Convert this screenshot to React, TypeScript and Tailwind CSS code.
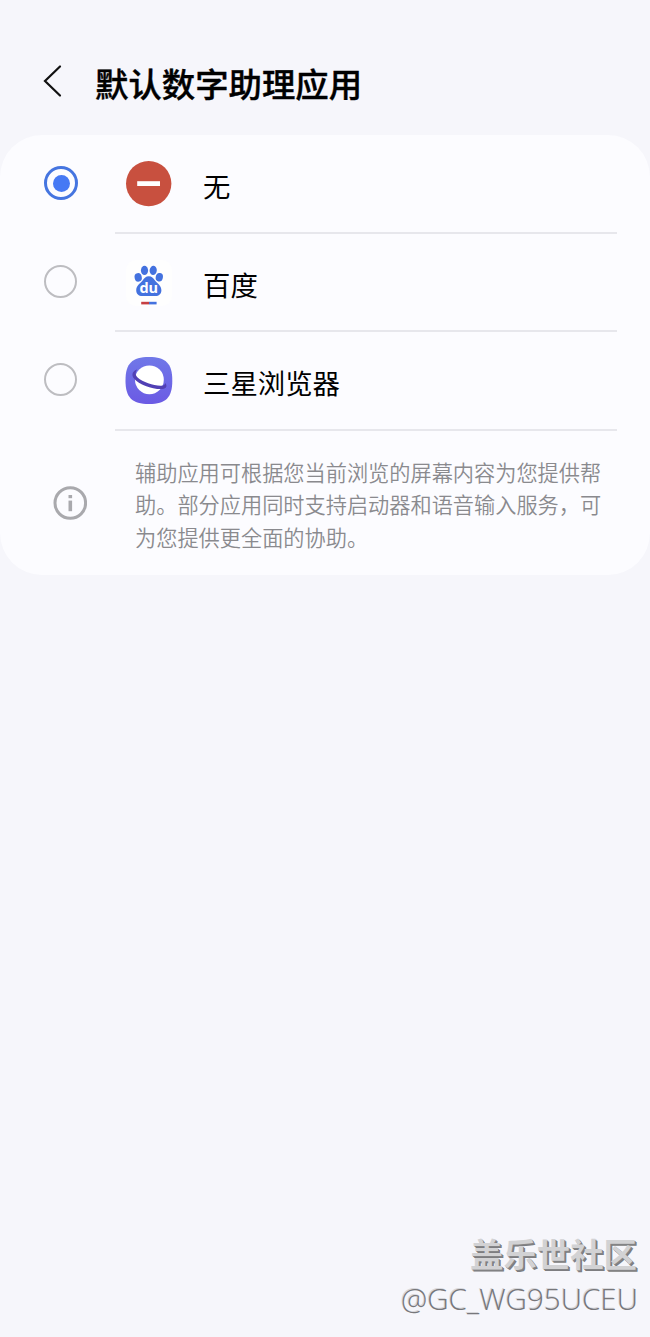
import type { ReactNode } from "react";

function NoneIcon() {
  return (
    <svg viewBox="0 0 48 48" className="size-12">
      <circle cx="23.7" cy="23.6" r="22.7" fill="#c8503f" />
      <rect x="12.2" y="21.2" width="22.8" height="4.8" fill="#fff" />
    </svg>
  );
}

function BaiduIcon() {
  return (
    <svg viewBox="0 0 48 48" className="size-12">
      <rect x="1" y="1" width="46" height="46" rx="10" fill="#fefefe" />
      <g fill="#4472df">
        <ellipse cx="13.2" cy="18.4" rx="3.6" ry="4.3" transform="rotate(-12 13.2 18.4)" />
        <ellipse cx="19.5" cy="11.4" rx="3.6" ry="4.6" />
        <ellipse cx="28.2" cy="11.4" rx="3.6" ry="4.6" transform="rotate(6 28.2 11.4)" />
        <ellipse cx="34.3" cy="18.2" rx="3.6" ry="4.3" transform="rotate(12 34.3 18.2)" />
        <path d="M23.800 17.2c-3 0-4.400 2-6.200 4.200-2 2.600-6.400 5-6.400 9.800 0 3.800 2.600 5.800 6 5.800h13.2c3.400 0 6-2 6-5.800 0-4.800-4.400-7.200-6.400-9.800-1.800-2.200-3.200-4.200-6.200-4.200Z" />
      </g>
      <text
        x="23.8"
        y="34.2"
        textAnchor="middle"
        fill="#fff"
        className="font-['Open_Sans',sans-serif] text-[14.5px] font-bold"
      >
        du
      </text>
      <rect x="16.2" y="42.8" width="8" height="2.6" fill="#c63f43" />
      <rect x="24" y="42.8" width="7.6" height="2.6" fill="#4472df" />
    </svg>
  );
}

function SamsungInternetIcon() {
  return (
    <svg viewBox="0 0 48 48" className="size-12">
      <defs>
        <linearGradient id="browser-bg" x1="0" y1="0" x2="0" y2="1">
          <stop offset="0" stopColor="#7078e8" />
          <stop offset="1" stopColor="#6b5ae4" />
        </linearGradient>
      </defs>
      <path
        d="M24 0C41 0 47.3 6.5 47.3 23.5S41 47 24 47 .5 40.5.5 23.5 7 0 24 0Z"
        fill="url(#browser-bg)"
      />
      <circle cx="24.4" cy="22.8" r="14.4" fill="#fff" />
      <path
        d="M12.2 12.4C7.600 13.600 6 17.800 9 21.400c5 6 17 10.400 27 10.700 5.400.1 6.600-2.700 4.400-6.100-.6 2-1.800 2.800-4.800 2.700-7.600-.3-17.800-3.600-23-8.300-2.600-2.400-2.400-5.400-.4-8Z"
        fill="#5140b4"
      />
    </svg>
  );
}

function Radio({ checked }: { checked: boolean }) {
  return checked ? (
    <div className="flex size-[34px] items-center justify-center rounded-full border-[3px] border-[#4575e0]">
      <div className="size-[17px] rounded-full bg-[#4679f4]" />
    </div>
  ) : (
    <div className="size-[33px] rounded-full border-2 border-[#bdbdc1]" />
  );
}

type Option = {
  name: string;
  icon: ReactNode;
  checked: boolean;
};

export default function App() {
  const options: Option[] = [
    { name: "无", icon: <NoneIcon />, checked: true },
    { name: "百度", icon: <BaiduIcon />, checked: false },
    { name: "三星浏览器", icon: <SamsungInternetIcon />, checked: false },
  ];

  return (
    <main className="flex h-[1337px] w-[650px] flex-col overflow-hidden bg-[#f6f6fb] font-['Noto_Sans_CJK_SC',sans-serif] text-black">
      <header className="flex h-[135px] items-start pt-[58px] pl-[42px]">
        <svg viewBox="0 0 20 34" className="mt-[6px] h-[34px] w-5" fill="none">
          <path d="M18 2.5 3 17l15 14.5" stroke="#111" strokeWidth="2.2" strokeLinecap="round" />
        </svg>
        <h1 className="ml-[33px] text-[33.4px] leading-[50px] font-medium [-webkit-text-stroke:0.4px_#000]">
          默认数字助理应用
        </h1>
      </header>

      <section className="h-[440px] rounded-[42px] bg-[#fcfcff]">
        {options.map((option) => (
          <div key={option.name} className="flex h-[98.5px] pl-11">
            <div className="w-[34px] pt-[31px]">
              <Radio checked={option.checked} />
            </div>
            <div className="ml-[37px] flex w-[502px] border-b-2 border-[#e7e7ec] pl-[10px]">
              <div className="mt-[25px]">{option.icon}</div>
              <div className="mt-[30px] ml-[30px] text-[27.4px] leading-[40px]">{option.name}</div>
            </div>
          </div>
        ))}

        <div className="flex pl-[53px]">
          <svg viewBox="0 0 34 34" className="mt-[55.5px] size-[34px] shrink-0">
            <circle cx="17.3" cy="17" r="15.3" fill="none" stroke="#a9a9ad" strokeWidth="3" />
            <rect x="15.5" y="9" width="3.6" height="3.2" fill="#a9a9ad" />
            <rect x="15.5" y="14.6" width="3.6" height="10.6" fill="#a9a9ad" />
          </svg>
          <p className="mt-[25.3px] ml-[48px] w-[480px] text-[21.2px] leading-[32.5px] font-[350] text-[#8a8a8e]">
            辅助应用可根据您当前浏览的屏幕内容为您提供帮
            <br />
            助。部分应用同时支持启动器和语音输入服务，可
            <br />
            为您提供更全面的协助。
          </p>
        </div>
      </section>

      <footer className="mt-auto flex flex-col items-end pr-[13px] pb-[17px]">
        <div className="text-[33.4px] leading-[44px] font-bold text-[#d2d2d4] [text-shadow:1px_1px_0_#858587,2px_2px_0_#7d7d80]">
          盖乐世社区
        </div>
        <div className="mt-[3px] -mr-px font-['Open_Sans',sans-serif] text-[29.6px] leading-[42px] font-light text-[#77777b] [text-shadow:-1px_-1px_0_#d8d8dc]">
          @GC_WG95UCEU
        </div>
      </footer>
    </main>
  );
}
